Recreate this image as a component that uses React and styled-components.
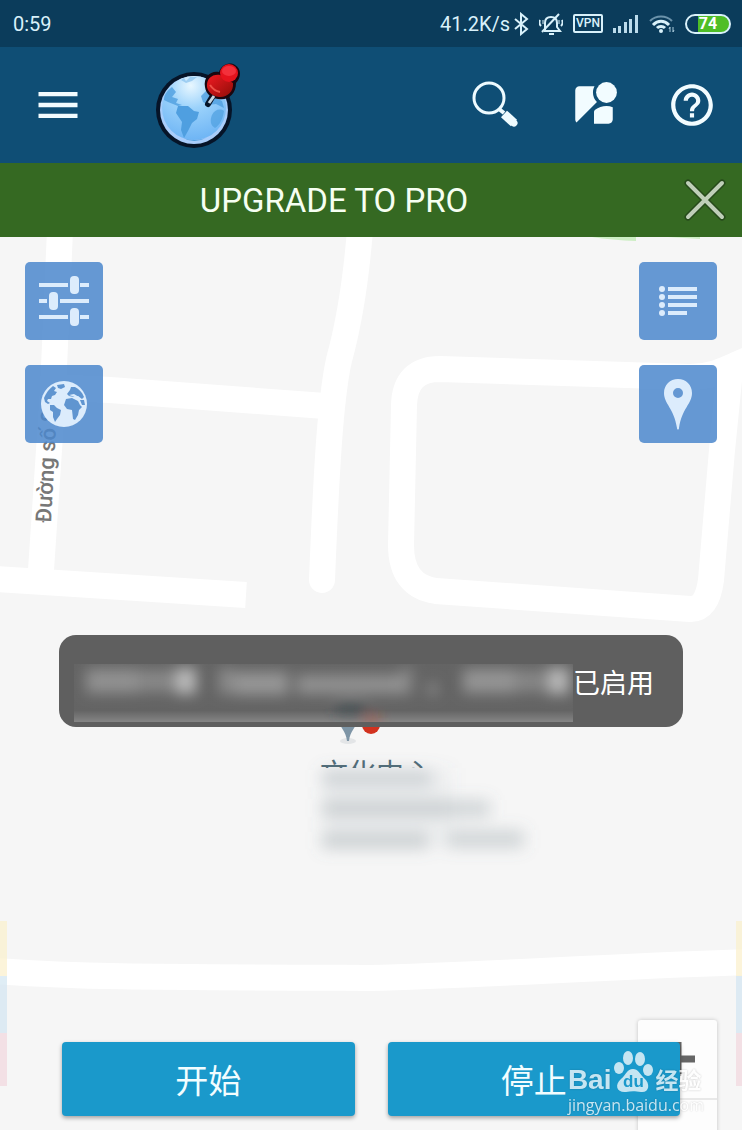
import React from 'react';
import styled, { createGlobalStyle } from 'styled-components';
//Icons
import { MdMenu, MdStreetview, MdHelpOutline } from 'react-icons/md';

const App = () => {
  return (
    <Screen>
      <GlobalStyle />
      <StatusBar>
        <span>0:59</span>
        <StatusIcons>
          <Speed>
            41.2K/s
            <BluetoothIcon />
          </Speed>
          <BellIcon />
          <Vpn>VPN</Vpn>
          <SignalIcon />
          <WifiIcon />
          <Battery>74</Battery>
        </StatusIcons>
      </StatusBar>

      <AppBar>
        <IconButton aria-label="Menu">
          <MdMenu size={52} />
        </IconButton>
        <LogoIcon />
        <Actions>
          <IconButton aria-label="Search">
            <SearchIcon />
          </IconButton>
          <IconButton aria-label="Street view">
            <MdStreetview size={50} />
          </IconButton>
          <IconButton aria-label="Help">
            <MdHelpOutline size={50} />
          </IconButton>
        </Actions>
      </AppBar>

      <Banner>
        <UpgradeLink href="#pro">UPGRADE TO PRO</UpgradeLink>
        <CloseButton aria-label="Close">
          <CloseIcon />
        </CloseButton>
      </Banner>

      <MapArea>
        <MapDrawing />
        <ZoomControl>
          <ZoomButton aria-label="Zoom in">
            <svg width="36" height="36" viewBox="0 0 36 36">
              <path d="M18 1V35M1 18H35" stroke="#666" strokeWidth="7" />
            </svg>
          </ZoomButton>
          <ZoomButton aria-label="Zoom out">
            <svg width="36" height="36" viewBox="0 0 36 36">
              <path d="M1 18H35" stroke="#666" strokeWidth="7" />
            </svg>
          </ZoomButton>
        </ZoomControl>
        <MapTools>
          <ToolColumn>
            <ToolButton aria-label="Settings">
              <SlidersIcon />
            </ToolButton>
            <ToolButton aria-label="Map type">
              <EarthIcon />
            </ToolButton>
          </ToolColumn>
          <ToolColumn>
            <ToolButton aria-label="List">
              <ListIcon />
            </ToolButton>
            <ToolButton aria-label="Place">
              <PinIcon />
            </ToolButton>
          </ToolColumn>
        </MapTools>
        <Toast role="status">
          <Redacted />
          <span>已启用</span>
        </Toast>
        <BottomBar>
          <MainButton>开始</MainButton>
          <MainButton>停止</MainButton>
        </BottomBar>
        <Watermark>
          <WatermarkLogo>
            <b>Bai</b>
            <Paw>
              <PawIcon />
              <span>du</span>
            </Paw>
            <em>经验</em>
          </WatermarkLogo>
          <span>jingyan.baidu.com</span>
        </Watermark>
      </MapArea>
    </Screen>
  );
};

//Status bar drawings
const BluetoothIcon = () => (
  <svg width="16" height="24" viewBox="0 0 16 24" fill="none" stroke="#d9f1fa" strokeWidth="2">
    <path d="M2 7L14 17L8 22V2L14 7L2 17" />
  </svg>
);

const BellIcon = () => (
  <svg width="24" height="24" viewBox="0 0 24 24" fill="none" stroke="#d9f1fa" strokeWidth="2">
    <path d="M6 18V11C6 7 8 5 12 5C16 5 18 7 18 11V15L21 19H5" />
    <path d="M20 2L3 20" />
    <path d="M10 22H15" />
    <path d="M1 8C0 10 0 12 2 14M23 8C24 10 24 12 22 14" />
    <path d="M4 8V12M20 8V12" strokeWidth="1" />
  </svg>
);

const SignalIcon = () => (
  <svg width="26" height="20" viewBox="0 0 26 20" fill="#bcdcec">
    <rect x="0" y="14" width="3" height="5" />
    <rect x="5" y="12" width="3" height="7" />
    <rect x="11" y="8" width="3" height="11" />
    <rect x="16" y="5" width="3" height="14" />
    <rect x="22" y="1" width="3" height="18" />
  </svg>
);

const WifiIcon = () => (
  <svg width="26" height="22" viewBox="0 0 26 22" fill="none" strokeWidth="3">
    <path d="M1 8C7 2 17 2 23 8" stroke="#6b93ab" strokeWidth="2" />
    <path d="M4 12C9 7 15 7 20 12" stroke="#d9f1fa" />
    <path d="M8 15C10 13 14 13 16 15" stroke="#d9f1fa" />
    <circle cx="12" cy="18" r="2" fill="#d9f1fa" />
    <path d="M21 14V19M24 14V19" stroke="#a9cadb" strokeWidth="1" />
    <path d="M20 16L21 14M24 19L25 17" stroke="#a9cadb" strokeWidth="1" />
  </svg>
);

//App bar drawings
const LogoIcon = () => (
  <svg width="88" height="88" viewBox="154 61 88 88" role="img" aria-label="Globe">
    <defs>
      <radialGradient id="sea" cx="0.45" cy="0.15" r="0.9">
        <stop offset="0" stopColor="#e8f7ff" />
        <stop offset="0.4" stopColor="#9bd2fb" />
        <stop offset="1" stopColor="#6ab2f4" />
      </radialGradient>
      <linearGradient id="pinBody" x1="0" y1="0" x2="1" y2="1">
        <stop offset="0" stopColor="#f01a22" />
        <stop offset="1" stopColor="#8f0d08" />
      </linearGradient>
    </defs>
    <circle cx="194" cy="110" r="38" fill="#061428" />
    <circle cx="194" cy="110" r="34" fill="#a9cdfb" />
    <circle cx="194" cy="108" r="32" fill="url(#sea)" />
    <g fill="#4f9fe0">
      <path d="M164 100C164 94 168 90 172 87L176 92L172 97L178 99L176 103L182 105L178 106L168 102Z" opacity="0.8" />
      <path d="M178 106L188 106L194 111L199 112L197 119L192 123L188 131L184 138L181 130L182 122L176 113Z" />
      <path d="M201 96L206 91L216 98L222 101L224 108L216 104L208 105L203 102Z" opacity="0.8" />
      <path d="M212 115C214 110 220 108 224 111C223 118 220 125 215 128C210 125 210 120 212 115Z" opacity="0.7" />
      <path d="M181 80L184 78L186 81L190 77L197 77L192 81L186 83Z" opacity="0.4" />
      <path d="M183 138Q194 144 206 138Q194 142 183 138Z" />
    </g>
    <path d="M214 94L208 104" stroke="#061428" strokeWidth="6" strokeLinecap="round" />
    <path
      d="M205 87C203 77 211 70 219 72C221 66 228 61 235 65C242 69 241 78 236 83C236 94 228 101 218 99C211 98 206 94 205 87Z"
      fill="#1a0710"
    />
    <path
      d="M207 87C206 79 212 74 220 75L233 83C234 92 226 98 219 97C212 96 208 92 207 87Z"
      fill="url(#pinBody)"
    />
    <circle cx="229" cy="73" r="9" fill="#e5131d" />
    <ellipse cx="229" cy="71" rx="7" ry="5" fill="#fa3d48" opacity="0.7" />
    <path d="M210 85Q214 91 220 92" stroke="#ff6a5c" strokeWidth="2" fill="none" opacity="0.7" />
    <path d="M214 96L209 103" stroke="#c6d6e2" strokeWidth="3" />
  </svg>
);

const SearchIcon = () => (
  <svg width="50" height="50" viewBox="0 0 50 50" fill="none" stroke="#eefbff">
    <circle cx="18" cy="18" r="15" strokeWidth="3" />
    <path d="M28 29L33 33" strokeWidth="4" />
    <path d="M33 34L43 43" strokeWidth="9" />
    <path d="M41 41L43 43" strokeWidth="7" strokeLinecap="round" />
  </svg>
);

const CloseIcon = () => (
  <svg width="42" height="42" viewBox="0 0 42 42" strokeLinecap="round">
    <path d="M4 4L38 38M38 4L4 38" stroke="#264a1b" strokeWidth="7" />
    <path d="M4 4L38 38M38 4L4 38" stroke="#bfcfb9" strokeWidth="4" />
  </svg>
);

//Map tool drawings
const SlidersIcon = () => (
  <svg width="50" height="52" viewBox="0 0 50 52" fill="#dcecfc">
    <path d="M0 8H29V12H0ZM41 8H50V12H41ZM0 24H8V28H0ZM21 24H50V28H21ZM0 40H29V44H0ZM41 40H50V44H41Z" />
    <rect x="31" y="1" width="9" height="18" rx="4" />
    <rect x="10" y="17" width="9" height="18" rx="4" />
    <rect x="31" y="33" width="9" height="18" rx="4" />
  </svg>
);

const EarthIcon = () => (
  <svg width="46" height="46" viewBox="0 0 46 46">
    <circle cx="23" cy="23" r="23" fill="#dcecfc" />
    <g fill="#6095d0">
      <path d="M3 17C5 12 8 8 12 5L15 7L13 10L16 11L14 14L11 15L10 18L7 18L6 20L9 22L7 23L4 21Z" />
      <path d="M9 24L13 24L16 27L20 29L19 34L16 38L14 41L12 36L12 31L9 29Z" />
      <path d="M16 4L23 3L24 6L20 8L17 7Z" />
      <path d="M26 13L29 9L30 6L34 6C38 8 41 11 43 16L41 18L37 15L33 16L28 15Z" />
      <path d="M25 18L31 17L37 20L39 24L41 26L38 29L37 34L34 39L32 38L31 29L26 28L23 24Z" />
      <path d="M39 19L43 19L44 24L41 24Z" />
      <path d="M28 14L33 13L38 16L36 17L31 15Z" fill="#dcecfc" />
    </g>
  </svg>
);

const ListIcon = () => (
  <svg width="40" height="32" viewBox="0 0 40 32" fill="#dcecfc">
    <circle cx="4" cy="4" r="3" />
    <circle cx="4" cy="12" r="3" />
    <circle cx="4" cy="20" r="3" />
    <circle cx="4" cy="28" r="3" />
    <path d="M10 2H39V6H10ZM10 10H39V14H10ZM10 18H39V22H10ZM10 26H29V30H10Z" />
  </svg>
);

const PinIcon = () => (
  <svg width="30" height="52" viewBox="0 0 30 52" fill="#dcecfc">
    <path
      fillRule="evenodd"
      d="M15 1C23 1 29 7 29 15C29 26 19 30 16 50C16 52 14 52 14 50C11 30 1 26 1 15C1 7 7 1 15 1ZM15 10A5 5 0 1 0 15 20A5 5 0 1 0 15 10Z"
    />
  </svg>
);

const PawIcon = () => (
  <svg width="40" height="42" viewBox="0 0 40 42" fill="#fff">
    <ellipse cx="6" cy="17" rx="5" ry="6" />
    <ellipse cx="15" cy="7" rx="5" ry="7" />
    <ellipse cx="27" cy="8" rx="5" ry="7" />
    <ellipse cx="35" cy="19" rx="5" ry="6" />
    <path d="M20 18C25 18 27 23 31 27C38 33 36 42 28 41C22 40 18 40 13 41C4 42 1 34 8 28C13 24 14 18 20 18Z" />
  </svg>
);

const Redacted = () => (
  <RedactedArt viewBox="0 0 498 58" preserveAspectRatio="none" aria-hidden="true">
    <defs>
      <filter id="smear" x="-20%" y="-60%" width="140%" height="220%">
        <feGaussianBlur stdDeviation="7" />
      </filter>
      <linearGradient id="stripBase" x1="0" y1="0" x2="0" y2="1">
        <stop offset="0" stopColor="#fff" stopOpacity="0.03" />
        <stop offset="0.8" stopColor="#fff" stopOpacity="0.03" />
        <stop offset="1" stopColor="#fff" stopOpacity="0.24" />
      </linearGradient>
    </defs>
    <rect width="498" height="58" fill="url(#stripBase)" />
    <g filter="url(#smear)" fill="#fff">
      <rect x="12" y="5" width="52" height="24" opacity="0.29" />
      <rect x="64" y="6" width="40" height="22" opacity="0.23" />
      <rect x="102" y="4" width="20" height="26" opacity="0.55" />
      <rect x="144" y="4" width="16" height="26" opacity="0.24" />
      <rect x="160" y="8" width="54" height="23" opacity="0.32" />
      <rect x="222" y="11" width="106" height="19" opacity="0.29" />
      <rect x="326" y="4" width="12" height="26" opacity="0.22" />
      <rect x="354" y="19" width="8" height="12" opacity="0.3" />
      <rect x="388" y="5" width="52" height="24" opacity="0.31" />
      <rect x="440" y="6" width="30" height="22" opacity="0.22" />
      <rect x="472" y="4" width="22" height="26" opacity="0.53" />
      <rect x="262" y="37" width="28" height="13" fill="#33454c" opacity="0.6" />
      <rect x="292" y="52" width="12" height="10" fill="#d0402a" opacity="0.6" />
    </g>
  </RedactedArt>
);

const MapDrawing = () => (
  <MapArt viewBox="0 237 742 893" preserveAspectRatio="xMidYMin slice">
    <defs>
      <filter id="haze" x="-20%" y="-40%" width="140%" height="180%">
        <feGaussianBlur stdDeviation="8" />
      </filter>
      <clipPath id="labelTop">
        <rect x="300" y="740" width="160" height="28" />
      </clipPath>
    </defs>
    <path d="M592 237H636V241Q612 240 592 237ZM668 237H700V239Z" fill="#cdeec4" />
    <g fill="none" stroke="#fff" strokeWidth="26">
      <path d="M60 230L53 390L40 585" />
      <path d="M50 387L110 390L325 406" />
      <path d="M360 230C356 280 350 320 339 360C330 400 326 480 322 580" strokeLinecap="round" />
      <path d="M-5 579L246 595" />
      <path d="M760 355C735 363 720 377 690 377L440 369Q405 369 404 405L401 545Q401 586 436 591L690 609Q707 610 711 580L722 450L730 370" />
      <path d="M-5 971C80 977 140 977 370 978C480 975 600 967 750 962" />
    </g>
    <g opacity="0.75">
      <path d="M0 921H7V976H0ZM736 921H742V976H736Z" fill="#fbf1ce" />
      <path d="M0 976H7V1033H0ZM736 976H742V1033H736Z" fill="#d5e7f2" />
      <path d="M0 1033H7V1086H0ZM736 1033H742V1086H736Z" fill="#f2d9e0" />
    </g>
    <RoadName transform="translate(51 523) rotate(-87)">Đường số 8</RoadName>
    <ellipse cx="348" cy="741" rx="8" ry="3" fill="#e3e5e7" />
    <path d="M336 716H360C356 728 350 731 349 741H347C346 731 340 728 336 716Z" fill="#7e95a6" />
    <circle cx="371" cy="725" r="9" fill="#d2321f" />
    <PlaceName x="320" y="784" clipPath="url(#labelTop)">
      文化中心
    </PlaceName>
    <g filter="url(#haze)" fill="#6d7d86">
      <rect x="322" y="770" width="110" height="16" opacity="0.25" />
      <rect x="322" y="800" width="168" height="17" opacity="0.27" />
      <rect x="322" y="832" width="106" height="17" opacity="0.27" />
      <rect x="448" y="830" width="76" height="18" opacity="0.27" />
      <rect x="322" y="768" width="130" height="80" opacity="0.06" />
    </g>
  </MapArt>
);

const GlobalStyle = createGlobalStyle`
  * {
    box-sizing: border-box;
  }
  body {
    margin: 0;
    font-family: Roboto, 'Noto Sans CJK SC', sans-serif;
  }
  button {
    border: 0;
    padding: 0;
    font: inherit;
    color: inherit;
    background: none;
    cursor: pointer;
  }
  svg {
    display: block;
  }
`;

const Screen = styled.div`
  display: flex;
  flex-direction: column;
  min-height: 100vh;
  background: #f6f6f6;
`;

const StatusBar = styled.div`
  display: flex;
  align-items: center;
  justify-content: space-between;
  height: 47px;
  padding: 0 11px 0 13px;
  background: #0b3c5b;
  color: #d9f1fa;
  font-size: 20px;
`;

const StatusIcons = styled.div`
  display: flex;
  align-items: center;
  gap: 10px;
`;

const Speed = styled.span`
  display: flex;
  align-items: center;
  gap: 3px;
`;

const Vpn = styled.span`
  border: 2px solid #d9f1fa;
  border-radius: 2px;
  padding: 0 1px;
  font-size: 12px;
  font-weight: 500;
  line-height: 15px;
`;

const Battery = styled.span`
  width: 46px;
  border: 2px solid #d9f1fa;
  border-radius: 10px;
  background: linear-gradient(to right, #0b3c5b 11px, #4fbe27 11px);
  color: #fff;
  font-size: 16px;
  font-weight: 700;
  line-height: 16px;
  text-align: center;
`;

const AppBar = styled.header`
  display: flex;
  align-items: center;
  height: 116px;
  padding: 0 25px 0 32px;
  background: #0f4e75;
  color: #f2fcff;
  > svg {
    flex: none;
    margin-left: 70px;
  }
`;

const Actions = styled.nav`
  display: flex;
  gap: 48px;
  margin-left: auto;
`;

const IconButton = styled.button`
  display: grid;
  place-items: center;
`;

const Banner = styled.div`
  display: flex;
  align-items: center;
  height: 74px;
  background: #356922;
`;

const UpgradeLink = styled.a`
  flex: 1;
  color: #f6fff2;
  font-size: 33px;
  text-align: center;
  text-decoration: none;
`;

const CloseButton = styled(IconButton)`
  width: 74px;
  height: 74px;
`;

const MapArea = styled.main`
  position: relative;
  flex: 1;
  display: flex;
  flex-direction: column;
  overflow: hidden;
`;

const MapArt = styled.svg`
  position: absolute;
  inset: 0;
  width: 100%;
  height: 100%;
`;

const RoadName = styled.text`
  fill: #777;
  font-size: 22px;
  font-weight: 500;
`;

const PlaceName = styled.text`
  fill: #4f6b78;
  font-size: 28px;
`;

const MapTools = styled.div`
  position: relative;
  display: flex;
  justify-content: space-between;
  padding: 25px;
`;

const ToolColumn = styled.div`
  display: grid;
  gap: 25px;
`;

const ToolButton = styled.button`
  display: grid;
  place-items: center;
  width: 78px;
  height: 78px;
  border-radius: 5px;
  background: rgba(75, 135, 204, 0.85);
`;

const Toast = styled.div`
  position: relative;
  display: flex;
  align-items: center;
  height: 92px;
  margin: 167px 59px 0;
  padding: 0 29px 0 15px;
  border-radius: 17px;
  background: #5f5f5f;
  color: #fff;
  font-size: 27px;
`;

const RedactedArt = styled.svg`
  flex: 1;
  align-self: flex-end;
  min-width: 0;
  height: 58px;
  margin-bottom: 5px;
  overflow: hidden;
`;

const BottomBar = styled.div`
  position: relative;
  display: flex;
  gap: 33px;
  margin-top: auto;
  padding: 40px 62px 14px;
`;

const MainButton = styled.button`
  flex: 1;
  height: 74px;
  border-radius: 4px;
  background: #1a99cb;
  box-shadow: 0 2px 4px rgba(0, 0, 0, 0.35);
  color: #f2fdff;
  font-size: 33px;
`;

const ZoomControl = styled.div`
  position: absolute;
  right: 25px;
  bottom: -46px;
  display: grid;
  border-radius: 3px;
  background: #fdfdfd;
  box-shadow: 0 0 4px rgba(0, 0, 0, 0.2);
`;

const ZoomButton = styled.button`
  display: grid;
  place-items: center;
  width: 79px;
  height: 78px;
  & + & {
    border-top: 2px solid #e8e8e8;
  }
`;

const Watermark = styled.div`
  position: absolute;
  right: 38px;
  bottom: 15px;
  display: grid;
  gap: 2px;
  color: #fff;
  font-family: 'Open Sans', 'Noto Sans CJK SC', sans-serif;
  font-size: 16px;
  line-height: 20px;
  opacity: 0.75;
  text-shadow: 0 0 2px rgba(0, 0, 0, 0.3);
  pointer-events: none;
`;

const WatermarkLogo = styled.div`
  display: flex;
  align-items: flex-end;
  gap: 2px;
  b {
    font-family: 'Liberation Sans', sans-serif;
    font-size: 28px;
    line-height: 26px;
  }
  em {
    font-size: 23px;
    font-style: normal;
    font-weight: 700;
    line-height: 26px;
  }
`;

const Paw = styled.span`
  position: relative;
  span {
    position: absolute;
    inset: auto 0 2px;
    color: #1a99cb;
    font-family: 'Liberation Sans', sans-serif;
    font-size: 17px;
    font-weight: 700;
    line-height: 18px;
    text-align: center;
    text-shadow: none;
  }
`;

export default App;
